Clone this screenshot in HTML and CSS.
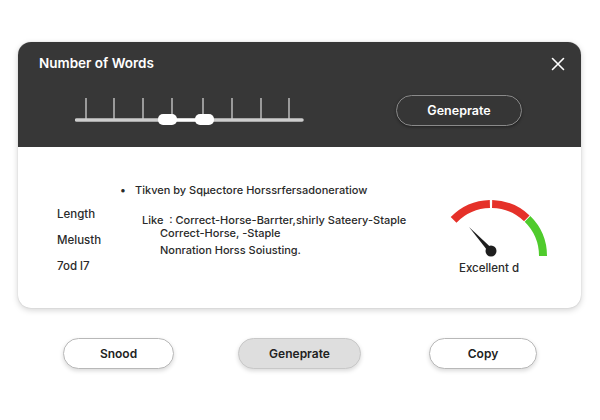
FILE: index.html
```html
<!DOCTYPE html>
<html>
<head>
<meta charset="utf-8">
<link rel="stylesheet" href="styles.css">
</head>
<body>
<div class="card">
  <div class="head">
    <div class="head-top">
      <span class="title">Number of Words</span>
      <svg class="close" width="14" height="14" viewBox="0 0 14 14"><path d="M1.5 1.5 L12.5 12.5 M12.5 1.5 L1.5 12.5" stroke="#fff" stroke-width="1.6" stroke-linecap="round"/></svg>
    </div>
    <div class="head-row">
      <svg class="slider" width="230" height="30" viewBox="0 0 230 30">
        <g stroke="#cfcfcf" stroke-width="1.3">
          <line x1="11" y1="0" x2="11" y2="22"/>
          <line x1="39" y1="0" x2="39" y2="22"/>
          <line x1="68" y1="0" x2="68" y2="22"/>
          <line x1="97" y1="0" x2="97" y2="22"/>
          <line x1="128" y1="0" x2="128" y2="22"/>
          <line x1="157" y1="0" x2="157" y2="22"/>
          <line x1="186" y1="0" x2="186" y2="22"/>
          <line x1="214" y1="0" x2="214" y2="22"/>
        </g>
        <line x1="1.5" y1="22" x2="227" y2="22" stroke="#cdcdcd" stroke-width="3.5" stroke-linecap="round"/>
        <line x1="92" y1="22" x2="130" y2="22" stroke="#fff" stroke-width="3"/>
        <rect x="83" y="16" width="19" height="11" rx="5" fill="#fff"/>
        <rect x="120" y="16" width="19" height="11" rx="5" fill="#fff"/>
      </svg>
      <button class="gen-dark">Geneprate</button>
    </div>
  </div>
  <div class="body">
    <div class="labels">
      <div>Length</div>
      <div>Melusth</div>
      <div>7od l7</div>
    </div>
    <div class="desc">
      <div class="bullet"><span class="dot">•</span>Tikven by Sqμectore Horssrfersadoneratiow</div>
      <div class="like">Like&nbsp; : Correct-Horse-Barrter,shirly Sateery-Staple</div>
      <div class="sub1">Correct-Horse, -Staple</div>
      <div class="sub2">Nonration Horss Soiusting.</div>
    </div>
    <div class="gauge">
      <svg width="120" height="72" viewBox="0 0 120 72">
        <g fill="none" stroke-width="8">
          <path d="M14.6 33.9 A52 52 0 0 1 50.9 18" stroke="#e53129"/>
          <path d="M53.1 18 A52 52 0 0 1 87.8 32.3" stroke="#e53129"/>
          <path d="M88.5 32.9 A52 52 0 0 1 104 70" stroke="#4fcb2c"/>
        </g>
        <path d="M30 41 L53.8 63.3 L50.2 66.7 Z" fill="#1e1e1e"/>
        <circle cx="52" cy="65" r="5.5" fill="#1e1e1e"/>
      </svg>
      <div class="gauge-label">Excellent d</div>
    </div>
  </div>
</div>
<div class="actions">
  <button class="btn">Snood</button>
  <button class="btn btn-gray">Geneprate</button>
  <button class="btn">Copy</button>
</div>
</body>
</html>
```

FILE: styles.css
```css
* { box-sizing: border-box; }
html, body { margin: 0; padding: 0; background: #fff; }
body {
  font-family: Inter, "Noto Sans", "Liberation Sans", sans-serif;
  color: #2a2a2a;
  width: 600px;
  height: 420px;
  overflow: hidden;
}
.card {
  margin: 42px 0 0 18px;
  width: 563px;
  height: 266px;
  border-radius: 13px;
  background: #fff;
  box-shadow: 0 2px 6px rgba(0,0,0,0.18), 0 0 1px rgba(0,0,0,0.25);
  overflow: hidden;
}
.head {
  background: #373737;
  height: 105px;
  padding: 12px 16px 0 21px;
}
.head-top {
  display: flex;
  justify-content: space-between;
  align-items: center;
}
.title {
  color: #fff;
  font-size: 13.5px;
  font-weight: 600;
}
.close { margin-top: 3px; }
.head-row {
  display: flex;
  align-items: flex-start;
  margin-top: 24px;
  padding-left: 36px;
}
.slider { display: block; margin-top: 3px; }
.gen-dark {
  margin-left: 91px;
  width: 126px;
  height: 31px;
  border-radius: 16px;
  border: 1.3px solid #8a8a8a;
  background: #363636;
  color: #fff;
  font-family: inherit;
  font-size: 12.5px;
  font-weight: 600;
  box-shadow: 0 1px 3px rgba(0,0,0,0.4);
}
.body {
  display: flex;
  height: 161px;
  font-size: 11.5px;
  font-weight: 500;
  color: #2a2a2a;
}
.labels {
  padding: 59px 0 0 39px;
  width: 102px;
  display: flex;
  flex-direction: column;
  gap: 10px;
  line-height: 16px;
}
.desc {
  padding-top: 35px;
  width: 300px;
  line-height: 16px;
  font-size: 11px;
}
.bullet { padding-left: 15px; }
.dot { display: inline-block; width: 15px; margin-left: -15px; }
.like { margin-top: 14px; padding-left: 22px; }
.sub1 { margin-top: -3px; padding-left: 40px; }
.sub2 { margin-top: 1px; padding-left: 40px; }
.gauge {
  margin-left: 19px;
  padding-top: 39px;
  display: flex;
  flex-direction: column;
  align-items: center;
  width: 120px;
}
.gauge svg { display: block; }
.gauge-label {
  margin-top: 3px;
  margin-left: -20px;
  font-size: 11.5px;
  font-weight: 500;
}
.actions {
  display: flex;
  margin-top: 30px;
  padding-left: 63px;
}
.btn {
  width: 111px;
  height: 31px;
  border-radius: 16px;
  border: 1px solid #b8b8b8;
  background: #fff;
  color: #222;
  font-family: inherit;
  font-size: 12px;
  font-weight: 600;
  box-shadow: 0 2px 4px rgba(0,0,0,0.15);
}
.btn-gray {
  margin-left: 64px;
  width: 123px;
  background: #dedede;
  border-color: #c8c8c8;
}
.btn:last-child {
  margin-left: 68px;
  width: 108px;
}
```
